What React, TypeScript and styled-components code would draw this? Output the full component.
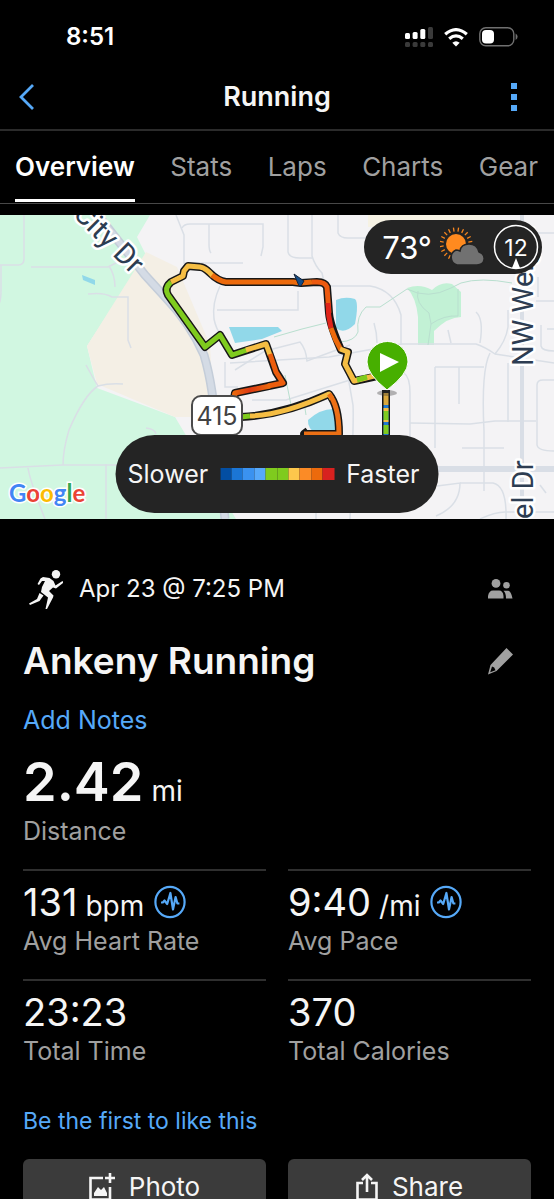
import React from "react";
import styled, { createGlobalStyle } from "styled-components";

const Global = createGlobalStyle`
  * { box-sizing: border-box; }
  body { margin: 0; background: #000; color: #f5f5f5; font-family: Inter, "Liberation Sans", sans-serif; }
  button { font: inherit; color: inherit; background: none; border: 0; padding: 0; cursor: pointer; }
  a { color: inherit; text-decoration: none; }
  h1, h2, p, dl, dd, dt { margin: 0; }
  svg { display: block; flex: none; }
`;

const Page = styled.div`
  width: 100%;
  height: 100vh;
  overflow-y: auto;
  scrollbar-width: none;
`;

const StatusBar = styled.div`
  display: flex;
  align-items: center;
  justify-content: space-between;
  height: 64px;
  padding: 22px 36px 12px 66px;
`;

const Clock = styled.time`
  font-size: 24px;
  line-height: 28px;
  font-weight: 600;
  color: #fff;
`;

const StatusIcons = styled.div`
  display: flex;
  align-items: center;
  gap: 11px;
`;

const Header = styled.header`
  display: grid;
  grid-template-columns: 48px 1fr 48px;
  align-items: center;
  height: 67px;
  border-bottom: 2px solid #2b2b2b;
`;

const IconButton = styled.button`
  display: flex;
  align-items: center;
  height: 40px;
`;

const Title = styled.h1`
  text-align: center;
  font-size: 27px;
  line-height: 32px;
  font-weight: 600;
`;

const Tabs = styled.nav`
  display: flex;
  justify-content: space-between;
  height: 73px;
  padding: 0 16px 0 15px;
  border-bottom: 1px solid #484848;
`;

const Tab = styled.a<{ $active?: boolean }>`
  display: flex;
  align-items: center;
  height: 71px;
  padding-top: 3px;
  font-size: 26px;
  line-height: 32px;
  font-weight: ${(p) => (p.$active ? 600 : 400)};
  color: ${(p) => (p.$active ? "#fff" : "#a0a0a0")};
  border-bottom: 3px solid ${(p) => (p.$active ? "#fff" : "transparent")};
`;

const MapPanel = styled.section`
  position: relative;
  height: 304px;
  margin-top: 11px;
  overflow: hidden;
  background: #f4f3f5;
`;

const MapDrawing = styled.svg`
  width: 100%;
  height: 100%;
`;

const WeatherPill = styled.div`
  position: absolute;
  top: 5px;
  right: 12px;
  display: flex;
  align-items: center;
  gap: 8px;
  height: 54px;
  padding: 0 3px 0 18px;
  border-radius: 27px;
  background: #242424;
  color: #fff;
  font-size: 31px;
`;

const LegendPill = styled.div`
  position: absolute;
  bottom: 6px;
  left: 50%;
  transform: translateX(-50%);
  display: flex;
  align-items: center;
  gap: 12px;
  height: 78px;
  padding: 0 19px 0 12px;
  border-radius: 39px;
  background: #242424;
  font-size: 25px;
`;

const Scale = styled.div`
  display: flex;
  width: 114px;
`;

const Swatch = styled.span<{ $color: string }>`
  flex: 1;
  height: 12px;
  background: ${(p) => p.$color};
`;

const Content = styled.main`
  padding: 46px 23px 32px;
`;

const Row = styled.div`
  display: flex;
  align-items: center;
  justify-content: space-between;
  padding-right: 18px;
`;

const DateRow = styled(Row)`
  height: 48px;
`;

const DateLabel = styled.div`
  display: flex;
  align-items: center;
  gap: 16px;
  padding-left: 6px;
  font-size: 24px;
  line-height: 32px;
`;

const TitleRow = styled(Row)`
  height: 48px;
  margin-top: 24px;
`;

const ActivityName = styled.h2`
  font-size: 37px;
  line-height: 48px;
  font-weight: 600;
`;

const TextLink = styled.a`
  display: block;
  width: fit-content;
  font-size: 25px;
  line-height: 32px;
  color: #56a9f8;
`;

const NotesLink = styled(TextLink)`
  margin-top: 19px;
`;

const LikeLink = styled(TextLink)`
  margin-top: 16px;
  font-size: 23px;
`;

const Distance = styled.dl`
  display: flex;
  flex-direction: column-reverse;
  margin-top: 22px;
`;

const Label = styled.dt`
  font-size: 25px;
  line-height: 32px;
  color: #a0a0a0;
`;

const BigValue = styled.dd`
  display: flex;
  align-items: baseline;
  gap: 8px;
  font-size: 54px;
  line-height: 48px;
  font-weight: 600;
`;

const Unit = styled.span`
  font-size: 28px;
  font-weight: 400;
`;

const Stats = styled.dl`
  display: grid;
  grid-template-columns: 1fr 1fr;
  column-gap: 22px;
  margin-top: 22px;
`;

const Stat = styled.div`
  display: flex;
  flex-direction: column-reverse;
  justify-content: flex-end;
  height: 110px;
  padding-top: 8px;
  border-top: 2px solid #2f2f2f;
`;

const Value = styled.dd`
  display: flex;
  align-items: center;
  gap: 10px;
  height: 46px;
  font-size: 38px;
  line-height: 40px;
`;

const Reading = styled.span`
  display: flex;
  align-items: baseline;
  gap: 8px;
  height: 40px;
`;

const Actions = styled.div`
  display: grid;
  grid-template-columns: 1fr 1fr;
  gap: 22px;
  margin-top: 22px;
`;

const ActionButton = styled.button`
  display: flex;
  align-items: center;
  justify-content: center;
  gap: 14px;
  height: 56px;
  border-radius: 6px;
  background: #3b3b3b;
  font-size: 26px;
  line-height: 32px;
`;

const legend = ["#034ea2", "#1b76d6", "#3a92f0", "#56a9fb", "#7fcb1e", "#7fcb1e", "#fdc74c", "#fb8b26", "#ec6a0c", "#d8211f"];

const Signal = () => (
  <svg width="28" height="20" viewBox="0 0 28 20" aria-hidden="true">
    <g fill="#fff">
      <rect x="0" y="6" width="5" height="6" rx="1.5" />
      <rect x="7.6" y="5" width="5" height="7" rx="1.5" />
      <rect x="15.3" y="2" width="5" height="10" rx="1.5" />
    </g>
    <g fill="#3a3a3a">
      <rect x="23" y="0" width="5" height="12" rx="1.5" />
      {[0, 7.6, 15.3, 23].map((x) => <rect key={x} x={x} y="15" width="5" height="5" rx="1.5" />)}
    </g>
  </svg>
);

const Wifi = () => (
  <svg width="24" height="19" viewBox="0 0 24 19" aria-hidden="true" fill="none" stroke="#fff" strokeWidth="3.2">
    <path d="M1.2 6.3Q12-3 22.8 6.3" />
    <path d="M5.2 10.8Q12 5 18.8 10.8" />
    <path d="M12 18.5L8.3 14.7Q12 11.7 15.7 14.7Z" fill="#fff" stroke="none" />
  </svg>
);

const Battery = () => (
  <svg width="39" height="20" viewBox="0 0 39 20" aria-hidden="true">
    <rect x=".8" y=".8" width="34" height="18" rx="6" fill="none" stroke="#707070" strokeWidth="1.4" />
    <rect x="3" y="3" width="12" height="13.6" rx="4" fill="#fff" />
    <path d="M36.6 6.5Q38.6 8 38.6 9.8T36.6 13Z" fill="#707070" />
  </svg>
);

const Pulse = () => (
  <svg width="32" height="34" viewBox="0 0 32 34" fill="none" stroke="#56a9f8" role="img" aria-label="In range">
    <ellipse cx="16" cy="17" rx="14.6" ry="15.2" strokeWidth="2.2" />
    <path d="M7 17.5H8.8L10.5 15.5L13.2 19L16.4 8L19 24.5L21.6 12L23.4 18.5H25.4" strokeWidth="2.2" strokeLinejoin="round" />
  </svg>
);

const roads = [
  "M24 0V44Q24 50 18 50H0", "M1 50V75Q1 88-2 90", "M31 52H108L120 46", "M109 51Q115 60 115 72",
  "M88 79Q104 77 112 82H128V125L131 133", "M176 0L184 20V48H243",
  "M182 13Q184 9 190 9H263V32L261 41", "M209 9V29Q209 36 211 38", "M220 71Q212 88 214 104Q216 114 221 120",
  "M217 95H298V76", "M288 0V37Q289 43 300 43H312", "M312 0V41Q315 51 322 58L325 71",
  "M338 0V18Q340 23 348 23H370", "M330 71H370Q394 75 401 100V129L329 142L230 148",
  "M401 129H476Q485 132 495 139L554 148", "M374 108Q377 118 377 128", "M448 115L451 128",
  "M476 97Q484 104 480 128", "M508 95V112Q506 126 495 139", "M490 138Q481 155 484 216V276",
  "M435 152H484", "M435 152V233", "M459 152V189", "M508 148V207", "M410 208L470 209L495 206H536M462 233H504",
  "M536 86H554M528 18H554", "M538 62V82", "M541 110V131Q542 136 554 136", "M547 114H554",
  "M554 165H543Q537 165 537 170V230Q538 236 554 236", "M437 271L460 268Q460 291 436 301", "M460 268H493Q507 271 506 304",
  "M480 304Q495 297 505 297H554", "M540 270L546 278", "M235 155L265 136L300 127Q306 134 307 146L350 130",
  "M225 147V172H238", "M252 185H286L350 165M346 150L353 190Q354 205 350 304", "M404 158Q410 162 410 178V230",
  "M86 150Q93 163 98 171Q109 168 123 169", "M98 171Q84 180 69 215Q63 235 63 250",
  "M146 213Q155 214 156 219", "M0 253L62 250H130M28 253Q30 266 45 304M106 249V304", "M316 294V304",
];

const RunMap = () => (
  <MapDrawing viewBox="0 0 554 304" preserveAspectRatio="xMidYMid slice" role="img" aria-label="Map of the running route">
    <defs>
      <linearGradient id="warm" x1="0" x2="1" y1="0" y2="0">
        <stop offset="0" stopColor="#ec6a0c" /><stop offset=".45" stopColor="#dc3a14" /><stop offset="1" stopColor="#ec6a0c" />
      </linearGradient>
    </defs>
    <rect width="554" height="304" fill="#f4f3f5" />
    <path d="M0 0H150L137 22L146 40L87 131L97 173L175 202L236 304H0Z" fill="#d1f7e1" />
    <path d="M146 37L177 52L210 130L214 202H175L97 169L87 131Z" fill="#f4efe5" />
    <path d="M368 0H490V12H368Z" fill="#f6f2e4" />
    <path d="M407 73Q420 68 432 75Q441 66 452 69L461 77V102Q448 102 434 116V130H418V102Q416 82 407 73Z" fill="#c2f1d5" />
    <g fill="none" stroke="#dadfe6" strokeWidth="1.5">
      {roads.map((d) => <path key={d} d={d} />)}
    </g>
    <path d="M405 254H554" stroke="#d9dee6" strokeWidth="6" />
    <path d="M522 0V304" stroke="#d9dee6" strokeWidth="4" />
    <path d="M90 -10L145 60L165 82Q190 108 204 140Q214 174 216 220L225 304" fill="none" stroke="#c4cdd9" strokeWidth="9" />
    <path d="M90 -10L145 60L165 82Q190 108 204 140Q214 174 216 220L225 304" fill="none" stroke="#d4dbe5" strokeWidth="6" />
    <g fill="none" stroke="#b9dfcf" strokeWidth="1">
      <path d="M274 122L302 114L326 108M340 127Q355 126 358 117Q356 101 366 92H380L407 74Q428 85 451 73L461 68Q480 62 512 68" />
      <path d="M418 76Q415 88 429 98L431 109L428 130M458 74V101Q444 100 431 109M285 160L291 190L304 187L306 200" />
    </g>
    <path d="M82 60L95 65V70L83 65Z" fill="#91d8e9" />
    <path d="M229 112L278 112L282 116L262 124L235 128Z" fill="#91d8e9" />
    <path d="M336 85Q345 81 355 84Q359 88 355 109Q344 120 336 113Z" fill="#91d8e9" />
    <path d="M308 205Q320 194 333 194L336 206V220H318Q307 214 308 205Z" fill="#91d8e9" />

    <g fill="none" strokeLinejoin="round" strokeLinecap="butt">
      <path d="M386 175V222M392 157Q376 162 354 166L345 149L348 137L341 135Q330 110 329 98L327 72Q325 67 317 67L301 68L293 67H226Q218 66 210 58Q204 52 200 52L188 51L184 56L183 61L171 67Q164 73 168 80L205 132L220 120L232 140L266 129L276 157L283 168L235 178L233 190M241 202Q283 200 329 179Q339 191 339 219H304L308 216" stroke="#171717" strokeWidth="8" />
      <g strokeWidth="5">
        <path d="M171 67Q164 73 168 80L205 132L220 120L232 140L247 135" stroke="#7fcb1e" />
        <path d="M171 67L183 61L184 56L188 51L200 52Q206 53 213 61" stroke="#f5bd43" />
        <path d="M212 60Q219 66 226 67H293L301 68L312 67" stroke="#ec6a0c" />
        <path d="M312 67H317Q325 67 327 72L329 98" stroke="#ed5a10" />
        <path d="M328 88Q328 101 331 113" stroke="#df241a" />
        <path d="M331 113Q335 125 341 135" stroke="#ec6a0c" />
        <path d="M340 134L348 137L345 149L354 166L378 160" stroke="#f5bd43" />
        <path d="M357 165L367 162" stroke="#7fcb1e" />
        <path d="M246 135L266 129L270 140" stroke="#f5bd43" />
        <path d="M235 178L233 190M270 139L276 157L283 168L268 171" stroke="#ec5d0d" />
        <path d="M270 171L235 178L233 190" stroke="url(#warm)" />
        <path d="M241 202L250 201" stroke="#7fcb1e" />
        <path d="M250 201Q283 200 329 179L332 184" stroke="#f5bd43" />
        <path d="M329 179Q339 191 339 219H304" stroke="#ec7015" />
        <path d="M386 178V190" stroke="#d9a83d" />
        <path d="M386 190V222" stroke="#2179cf" />
        <path d="M386 196V222" stroke="#7fcb1e" strokeDasharray="9 5" />
        <path d="M386 193V196M386 205V207" stroke="#f5bd43" />
      </g>
    </g>
    <path d="M294 59L304 66L301 71H299Z" fill="#124b86" stroke="#172438" />
    <ellipse cx="387" cy="178" rx="10" ry="3" fill="#333" opacity=".35" />
    <path d="M387 175Q367 159 367 147A20 20 0 1 1 408 147Q408 159 387 175Z" fill="#47af00" stroke="#fff" strokeWidth="1" />
    <path d="M380 138L399 147L380 157Z" fill="#fff" />

    <rect x="192" y="181" width="50" height="39" rx="9" fill="#fff" stroke="#4b4b4b" strokeWidth="2" />
    <text x="217" y="210" textAnchor="middle" fontSize="25" fontFamily="Inter, sans-serif" fill="#424242">415</text>
    <g fontFamily="Roboto, sans-serif" fontSize="29" fill="#2d3d52" stroke="#fff" strokeWidth="5" paintOrder="stroke" strokeLinejoin="round">
      <text transform="translate(72 0) rotate(45)">City Dr</text>
      <text transform="translate(533 151) rotate(-90)">NW Weigel</text>
      <text transform="translate(533 304) rotate(-90)">el Dr</text>
    </g>
    <text x="9" y="287" fontFamily="Lato, sans-serif" fontSize="24" fontWeight="700" stroke="#fff" strokeWidth="3" paintOrder="stroke">
      <tspan fill="#4285f4">G</tspan><tspan fill="#ea4335">o</tspan><tspan fill="#fbbc04">o</tspan><tspan fill="#4285f4">g</tspan><tspan fill="#34a853">l</tspan><tspan fill="#ea4335">e</tspan>
    </text>
  </MapDrawing>
);

const PartlyCloudy = () => (
  <svg width="45" height="40" viewBox="0 0 45 40" role="img" aria-label="Partly cloudy">
    <g stroke="#f7861f" strokeWidth="1.3">
      {Array.from({ length: 20 }, (_, i) => (
        <path key={i} d="M16 4.5V.5" transform={`rotate(${i * 18 + 9} 16 17)`} />
      ))}
    </g>
    <circle cx="16" cy="17" r="10" fill="#ff8a1f" />
    <path d="M17 38A8 8 0 0 1 16 23Q18 23 20 24Q21 17 29 17Q37 17 39 25Q45 27 44 33Q43 38 37 38Z" fill="#717171" stroke="#242424" strokeWidth="1.5" />
  </svg>
);

const WindDial = () => (
  <svg width="46" height="46" viewBox="0 0 46 46" role="img" aria-label="Wind 12">
    <circle cx="23" cy="23" r="21.5" fill="none" stroke="#fff" strokeWidth="1.5" />
    <path d="M23 34L27 44Q23 46 19 44Z" fill="#fff" />
    <text x="23" y="32" textAnchor="middle" fontFamily="Inter, sans-serif" fontSize="23" fill="#fff">12</text>
  </svg>
);

const Runner = () => (
  <svg width="34" height="39" viewBox="0 0 34 39" aria-hidden="true" fill="#f5f5f5">
    <circle cx="27" cy="4.2" r="4.2" />
    <path d="M14 7L20.5 8L24.5 11L26.5 15.5L33.5 11L34.5 12.5L27 18.5L24 17.5L20 21L24.5 25.5L24 27.5L18 39H16.5L19 27.5L12 22L13 17L16 11H13L10 15L8.5 14L11.5 8.5ZM10.5 23L14.5 25.5L10.5 31L1 35L0 33.5L8 29Z" />
  </svg>
);

const People = () => (
  <svg width="25" height="20" viewBox="0 0 25 20" aria-hidden="true" fill="#a0a0a0">
    <circle cx="8" cy="4.4" r="4.4" />
    <circle cx="18.5" cy="6.2" r="3.3" />
    <path d="M0 19.5V17Q1 11.5 5 11.5H11Q15 11.5 15.5 17V19.5ZM15.5 11.8H20Q23 12 24.5 19.5H18Q18 14 15.5 11.8Z" />
  </svg>
);

const Pencil = () => (
  <svg width="25" height="27" viewBox="0 0 25 27" aria-hidden="true" fill="#a0a0a0">
    <path fillRule="evenodd" d="M18.5 0L25 6.5L8.5 23L0 26.5L2.5 17ZM4 18.5L2.2 24.3L7.5 22.2L6.2 19.6Z" />
  </svg>
);

const PhotoIcon = () => (
  <svg width="26" height="28" viewBox="0 0 26 28" aria-hidden="true" fill="none" stroke="#f5f5f5" strokeWidth="2.6">
    <path d="M14 5H1.5V26.5H21V14" />
    <path d="M21 0V10M16 5H26" />
    <path d="M5 23V20L9 14L12 17L15 14L18 20V23Z" fill="#f5f5f5" stroke="none" />
  </svg>
);

const ShareIcon = () => (
  <svg width="22" height="28" viewBox="0 0 22 28" aria-hidden="true" fill="none" stroke="#f5f5f5" strokeWidth="2.6">
    <path d="M7 10H1.5V26.5H20.5V10H15M11 19V2M6 7L11 2L16 7" />
  </svg>
);

const tabs = ["Overview", "Stats", "Laps", "Charts", "Gear"];

const stats = [
  { value: "131", unit: "bpm", label: "Avg Heart Rate", pulse: true },
  { value: "9:40", unit: "/mi", label: "Avg Pace", pulse: true },
  { value: "23:23", label: "Total Time" },
  { value: "370", label: "Total Calories" },
];

export default function App() {
  return (
    <Page>
      <Global />
      <StatusBar>
        <Clock>8:51</Clock>
        <StatusIcons><Signal /><Wifi /><Battery /></StatusIcons>
      </StatusBar>
      <Header>
        <IconButton aria-label="Back">
          <svg width="48" height="26" viewBox="0 0 48 26" fill="none" stroke="#56a9f8" strokeWidth="2.8"><path d="M33 1L21 13L33 25" /></svg>
        </IconButton>
        <Title>Running</Title>
        <IconButton aria-label="More">
          <svg width="20" height="28" viewBox="0 0 20 28" fill="#56a9f8"><path d="M5 0h6v6H5zM5 11h6v6H5zM5 22h6v6H5z" /></svg>
        </IconButton>
      </Header>
      <Tabs>
        {tabs.map((t, i) => <Tab key={t} href={`#${t.toLowerCase()}`} $active={i === 0}>{t}</Tab>)}
      </Tabs>
      <MapPanel>
        <RunMap />
        <WeatherPill><span>73°</span><PartlyCloudy /><WindDial /></WeatherPill>
        <LegendPill>
          <span>Slower</span>
          <Scale>{legend.map((c, i) => <Swatch key={i} $color={c} />)}</Scale>
          <span>Faster</span>
        </LegendPill>
      </MapPanel>
      <Content>
        <DateRow>
          <DateLabel><Runner /><span>Apr 23 @ 7:25 PM</span></DateLabel>
          <IconButton aria-label="Privacy"><People /></IconButton>
        </DateRow>
        <TitleRow>
          <ActivityName>Ankeny Running</ActivityName>
          <IconButton aria-label="Edit name"><Pencil /></IconButton>
        </TitleRow>
        <NotesLink href="#notes">Add Notes</NotesLink>
        <Distance>
          <Label>Distance</Label>
          <BigValue>2.42 <Unit>mi</Unit></BigValue>
        </Distance>
        <Stats>
          {stats.map((s) => (
            <Stat key={s.label}>
              <Label>{s.label}</Label>
              <Value>
                <Reading>{s.value}{s.unit && <Unit>{s.unit}</Unit>}</Reading>
                {s.pulse && <Pulse />}
              </Value>
            </Stat>
          ))}
        </Stats>
        <LikeLink href="#like">Be the first to like this</LikeLink>
        <Actions>
          <ActionButton><PhotoIcon />Photo</ActionButton>
          <ActionButton><ShareIcon />Share</ActionButton>
        </Actions>
      </Content>
    </Page>
  );
}
